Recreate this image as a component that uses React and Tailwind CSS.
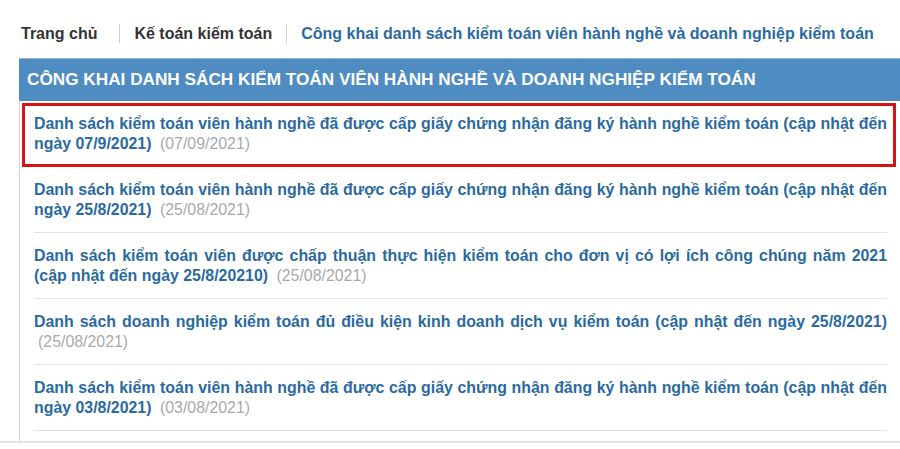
import React from "react";

const items = [
  {
    title:
      "Danh sách kiểm toán viên hành nghề đã được cấp giấy chứng nhận đăng ký hành nghề kiểm toán (cập nhật đến ngày 07/9/2021)",
    date: "(07/09/2021)",
    highlight: true,
  },
  {
    title:
      "Danh sách kiểm toán viên hành nghề đã được cấp giấy chứng nhận đăng ký hành nghề kiểm toán (cập nhật đến ngày 25/8/2021)",
    date: "(25/08/2021)",
  },
  {
    title:
      "Danh sách kiểm toán viên được chấp thuận thực hiện kiểm toán cho đơn vị có lợi ích công chúng năm 2021 (cập\u00a0nhật đến ngày 25/8/20210)",
    date: "(25/08/2021)",
  },
  {
    title:
      "Danh sách doanh nghiệp kiểm toán đủ điều kiện kinh doanh dịch vụ kiểm toán (cập nhật đến ngày 25/8/2021)",
    date: "(25/08/2021)",
  },
  {
    title:
      "Danh sách kiểm toán viên hành nghề đã được cấp giấy chứng nhận đăng ký hành nghề kiểm toán (cập nhật đến ngày 03/8/2021)",
    date: "(03/08/2021)",
  },
];

export default function App() {
  return (
    <div
      className="w-[900px] h-[449px] overflow-hidden bg-white"
      style={{ fontFamily: '"Liberation Sans", Arial, sans-serif' }}
    >
      <div className="h-[443px] border-b-2 border-[#e4e4e4] pl-[19px]">
        <nav className="flex items-center h-[58px] pt-[9px] text-[16px] font-bold leading-[20px]">
          <span className="text-[#333] pl-[2px]">Trang chủ</span>
          <span className="ml-[22px] mr-[14px] w-px h-[19px] bg-[#cfcfcf]" />
          <span className="text-[#333]">Kế toán kiếm toán</span>
          <span className="mx-[14px] w-px h-[19px] bg-[#cfcfcf]" />
          <span className="text-[#2b6aa0]">
            Công khai danh sách kiểm toán viên hành nghề và doanh nghiệp kiểm toán
          </span>
        </nav>
        <div className="h-[43px] bg-[#4f8cc1] border-t border-[#8fb6d8] flex items-center pl-[8px] text-white text-[17.2px] font-bold whitespace-nowrap">
          CÔNG KHAI DANH SÁCH KIỂM TOÁN VIÊN HÀNH NGHỀ VÀ DOANH NGHIỆP KIỂM TOÁN
        </div>
        <div className="h-[340px] border-l border-[#c9d3dc] pl-[14px] pr-[13px]">
          {items.map((it, i) => (
            <div
              key={i}
              className="relative border-b border-[#e3e3e3] pt-[13px] pb-[12px] text-[15.9px] leading-[20px] text-justify"
            >
              {it.highlight && (
                <div className="absolute left-[-12px] right-[-9px] top-[2px] bottom-[-1px] border-[3px] border-[#d41414] pointer-events-none" />
              )}
              <span className="font-bold text-[#2b6aa0]">{it.title}</span>{" "}
              <span className="ml-[4px] text-[#a9a9a9]">{it.date}</span>
            </div>
          ))}
        </div>
      </div>
    </div>
  );
}
